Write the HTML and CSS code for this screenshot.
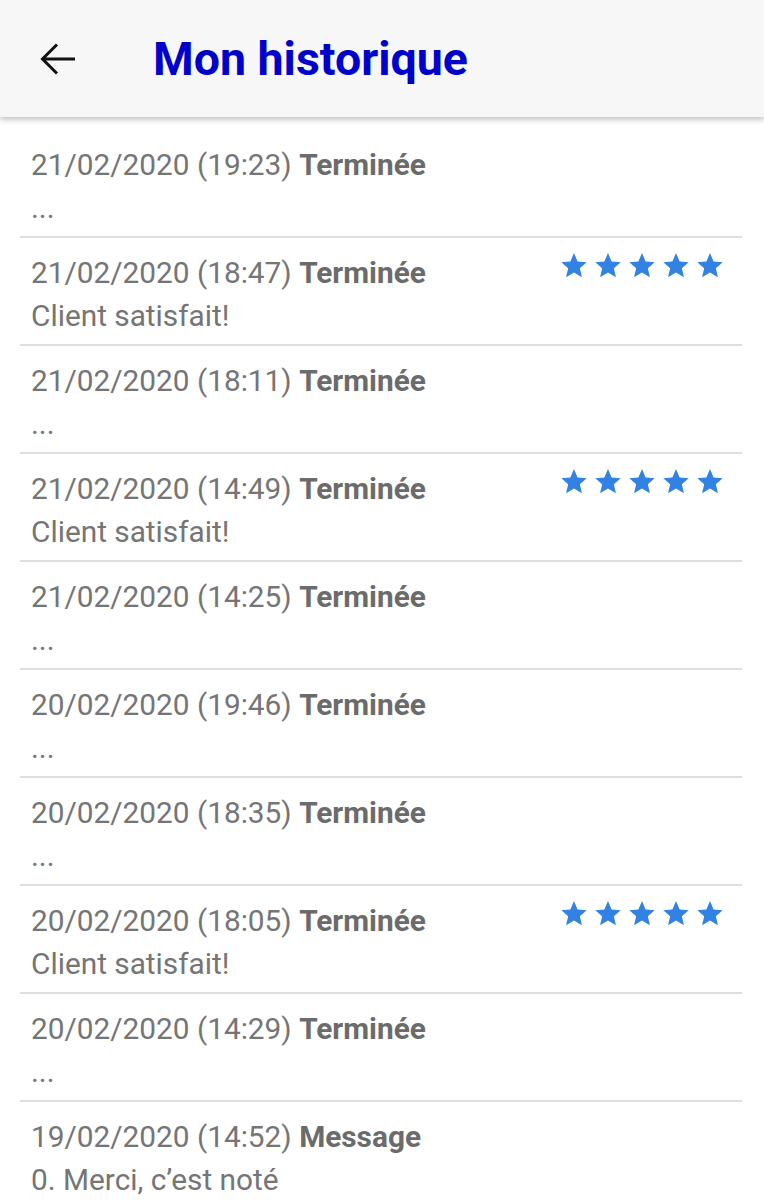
FILE: index.html
```html
<!DOCTYPE html>
<html lang="fr">
<head>
    <meta charset="UTF-8">
    <meta name="viewport" content="width=device-width, initial-scale=1.0">
    <title>Mon historique</title>
    <link rel="stylesheet" href="styles.css">
</head>
<body>
    <header class="topbar">
        <button class="back" aria-label="Retour">
            <svg width="38" height="34" viewBox="0 0 38 34">
                <path d="M36 17 H4 M18 2.5 L3.5 17 L18 31.5" fill="none" stroke="#111" stroke-width="3"/>
            </svg>
        </button>
        <h1>Mon historique</h1>
    </header>

    <ul class="history">
        <li class="entry">
            <div class="line"><span class="date">21/02/2020 (19:23)</span> <b>Terminée</b></div>
            <div class="line">...</div>
        </li>
        <li class="entry">
            <div class="line"><span class="date">21/02/2020 (18:47)</span> <b>Terminée</b></div>
            <div class="line">Client satisfait!</div>
            <div class="stars"></div>
        </li>
        <li class="entry">
            <div class="line"><span class="date">21/02/2020 (18:11)</span> <b>Terminée</b></div>
            <div class="line">...</div>
        </li>
        <li class="entry">
            <div class="line"><span class="date">21/02/2020 (14:49)</span> <b>Terminée</b></div>
            <div class="line">Client satisfait!</div>
            <div class="stars"></div>
        </li>
        <li class="entry">
            <div class="line"><span class="date">21/02/2020 (14:25)</span> <b>Terminée</b></div>
            <div class="line">...</div>
        </li>
        <li class="entry">
            <div class="line"><span class="date">20/02/2020 (19:46)</span> <b>Terminée</b></div>
            <div class="line">...</div>
        </li>
        <li class="entry">
            <div class="line"><span class="date">20/02/2020 (18:35)</span> <b>Terminée</b></div>
            <div class="line">...</div>
        </li>
        <li class="entry">
            <div class="line"><span class="date">20/02/2020 (18:05)</span> <b>Terminée</b></div>
            <div class="line">Client satisfait!</div>
            <div class="stars"></div>
        </li>
        <li class="entry">
            <div class="line"><span class="date">20/02/2020 (14:29)</span> <b>Terminée</b></div>
            <div class="line">...</div>
        </li>
        <li class="entry">
            <div class="line"><span class="date">19/02/2020 (14:52)</span> <b>Message</b></div>
            <div class="line">0. Merci, c’est noté</div>
        </li>
    </ul>

    <script>
        var star = '<svg width="28" height="27" viewBox="0 0 24 23"><path d="M12 0.8l3.1 7.2 7.8 0.7-5.9 5.2 1.8 7.7L12 17.6l-6.8 4 1.8-7.7-5.9-5.2 7.8-0.7z" fill="#3182e2"/></svg>';
        document.querySelectorAll('.stars').forEach(function (el) {
            el.innerHTML = star.repeat(5);
        });
    </script>
</body>
</html>
```

FILE: styles.css
```css
body {
    margin: 0;
    background: #fff;
    font-family: Roboto, "Noto Sans", sans-serif;
}

.topbar {
    display: flex;
    align-items: center;
    height: 117px;
    background-color: #f7f7f7;
    box-shadow: 0 3px 5px rgba(0, 0, 0, 0.22);
    position: relative;
}

.back {
    border: none;
    background: none;
    padding: 0;
    margin-left: 39px;
    width: 38px;
    height: 34px;
    cursor: pointer;
    display: flex;
}

.topbar h1 {
    margin: 0 0 0 76px;
    color: #0000cc;
    font-size: 46.5px;
    font-weight: 700;
}

.history {
    list-style: none;
    margin: 13px 22px 0 20px;
    padding: 0;
}

.entry {
    position: relative;
    padding: 13px 18px 7px 11px;
    border-bottom: 2px solid #dedede;
    color: #757575;
    font-size: 29.8px;
}

.entry:last-child {
    border-bottom: none;
}

.line {
    line-height: 43px;
    height: 43px;
    white-space: nowrap;
}

.line b {
    color: #6b6b6b;
}

.stars {
    position: absolute;
    right: 18px;
    top: 14px;
    display: flex;
    gap: 6px;
}
```
